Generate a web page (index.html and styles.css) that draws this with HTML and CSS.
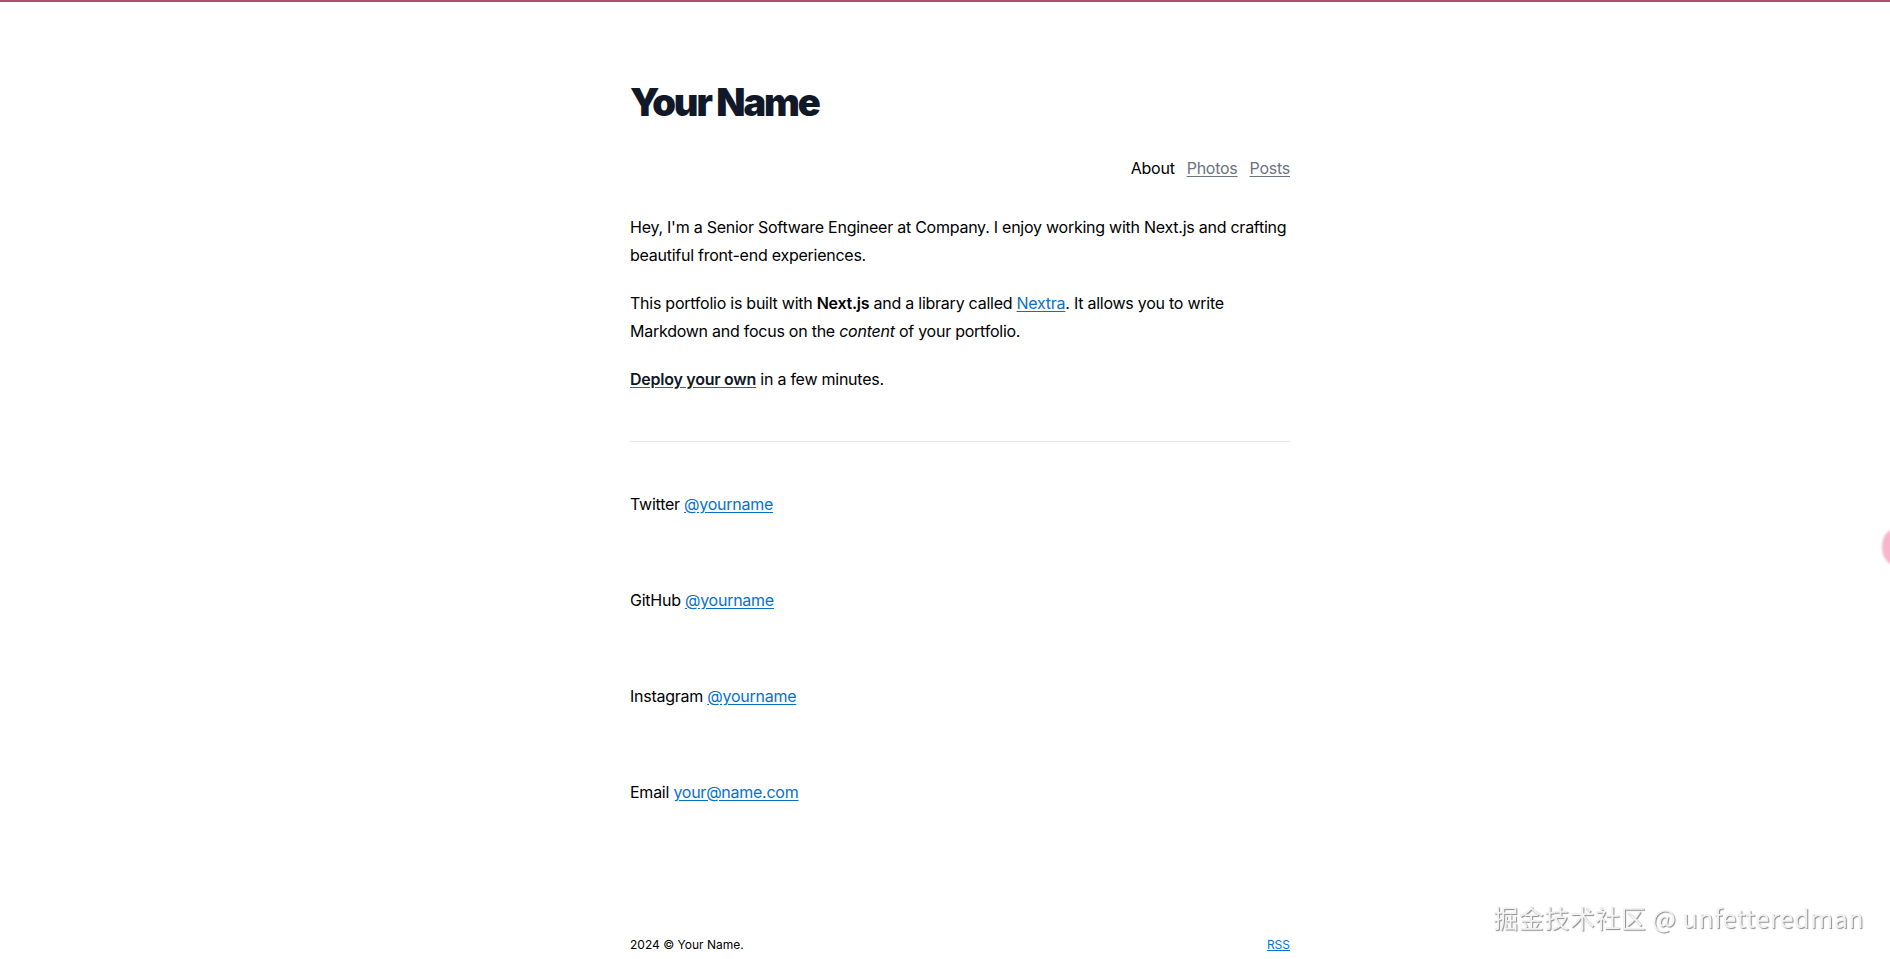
FILE: index.html
```html
<!DOCTYPE html>
<html lang="en">
<head>
    <meta charset="UTF-8">
    <meta name="viewport" content="width=device-width, initial-scale=1.0">
    <title>Your Name</title>
    <link rel="stylesheet" href="styles.css">
</head>
<body>

    <div class="page">
        <header class="header">
            <h1 class="title">Your Name</h1>
            <nav class="nav">
                <span class="nav-current">About</span>
                <a href="#">Photos</a>
                <a href="#">Posts</a>
            </nav>
        </header>

        <main class="prose">
            <p>Hey, I'm a Senior Software Engineer at Company. I enjoy working with Next.js and crafting beautiful front-end experiences.</p>
            <p>This portfolio is built with <strong>Next.js</strong> and a library called <a href="#">Nextra</a>. It allows you to write Markdown and focus on the <em>content</em> of your portfolio.</p>
            <p><a href="#" class="strong-link">Deploy your own</a> in a few minutes.</p>

            <hr>

            <ul class="contacts">
                <li>Twitter <a href="#">@yourname</a></li>
                <li>GitHub <a href="#">@yourname</a></li>
                <li>Instagram <a href="#">@yourname</a></li>
                <li>Email <a href="#">your@name.com</a></li>
            </ul>
        </main>

        <footer class="footer">
            <span>2024 © Your Name.</span>
            <a href="#">RSS</a>
        </footer>
    </div>

    <div class="side-bubble"></div>
    <div class="watermark">掘金技术社区 @ unfetteredman</div>

</body>
</html>
```

FILE: styles.css
```css
html {
    border-top: 2px solid #b04d6b;
}
body {
    margin: 0;
    background-color: #fff;
    color: #000;
    font-family: Inter, "Noto Sans", sans-serif;
    font-size: 16px;
    letter-spacing: -0.25px;
    overflow: hidden;
}
.page {
    max-width: 660px;
    margin: 0 auto;
    padding-left: 30px;
    padding-top: 76px;
}
.title {
    margin: 0;
    font-size: 38px;
    line-height: 48px;
    font-weight: 900;
    letter-spacing: -0.055em;
    color: #111827;
}
.nav {
    display: flex;
    justify-content: flex-end;
    gap: 12px;
    margin-top: 30px;
    line-height: 24px;
}
.nav a {
    color: #6b7280;
    text-decoration: underline;
    text-underline-offset: 2px;
}
.prose {
    margin-top: 33px;
    line-height: 28px;
}
.prose p {
    margin: 0 0 20px;
}
.prose a {
    color: #0a6fc8;
    text-decoration: underline;
    text-underline-offset: 2px;
}
.prose a.strong-link {
    color: #111827;
    font-weight: 600;
    text-decoration-color: #0a6fc8;
}
.prose strong {
    font-weight: 600;
}
.prose hr {
    border: none;
    border-top: 1px solid #e5e7eb;
    margin: 48px 0;
}
.contacts {
    list-style: none;
    margin: 0;
    padding: 0;
    display: flex;
    flex-direction: column;
    gap: 68px;
}
.footer {
    display: flex;
    justify-content: space-between;
    margin-top: 131px;
    font-size: 12px;
    line-height: 16px;
    letter-spacing: 0;
}
.footer a {
    color: #0a6fc8;
}
.side-bubble {
    position: fixed;
    right: -14px;
    top: 530px;
    width: 22px;
    height: 34px;
    border-radius: 50%;
    background-color: #f7b6cc;
    filter: blur(1px);
}
.watermark {
    position: fixed;
    right: 26px;
    bottom: 24px;
    font-family: "Noto Sans CJK SC", "Noto Sans", sans-serif;
    font-size: 25px;
    color: #f2f2f2;
    letter-spacing: 0.5px;
    text-shadow: 1px 1px 1px #8a8a8a;
}
```
